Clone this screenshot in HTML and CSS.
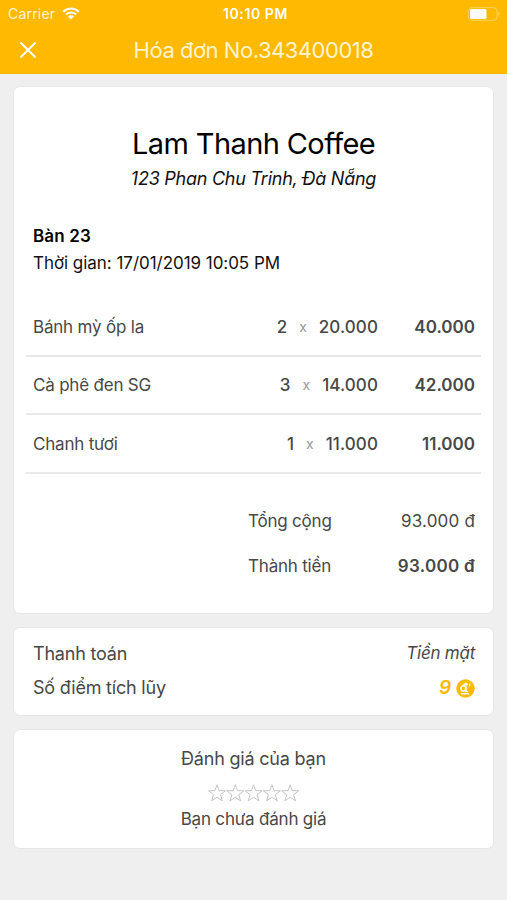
FILE: index.html
```html
<!DOCTYPE html>
<html lang="vi">
<head>
    <meta charset="UTF-8">
    <title>Hóa đơn</title>
    <link rel="stylesheet" href="styles.css">
</head>
<body>
<div class="header">
    <div class="status">
        <div class="carrier">
            <span>Carrier</span>
            <svg class="wifi" width="18" height="13" viewBox="0 0 18 13">
                <path d="M1.2 4.7a11 11 0 0 1 15.6 0M3.9 7.6a7.2 7.2 0 0 1 10.2 0" fill="none" stroke="#fff" stroke-width="2.1"/>
                <path d="M9 12.6 5.9 9.5a4.4 4.4 0 0 1 6.2 0z" fill="#fff"/>
            </svg>
        </div>
        <div class="clock">10:10 PM</div>
        <svg class="battery" width="32" height="14" viewBox="0 0 32 14">
            <rect x=".6" y=".6" width="28.4" height="12.8" rx="3.4" fill="none" stroke="#ffd15a"/>
            <rect x="2" y="2" width="16.5" height="10" rx="1.5" fill="#fff"/>
            <path d="M30.2 4.6c1.6.8 1.6 4 0 4.8z" fill="#ffd15a"/>
        </svg>
    </div>
    <div class="nav">
        <svg class="close" width="16" height="16" viewBox="0 0 16 16">
            <path d="M.5.5l15 15M15.5.5l-15 15" stroke="#fff" stroke-width="2"/>
        </svg>
        <h1>Hóa đơn No.343400018</h1>
    </div>
</div>

<div class="card bill">
    <h2>Lam Thanh Coffee</h2>
    <p class="address">123 Phan Chu Trinh, Đà Nẵng</p>
    <p class="table-name">Bàn 23</p>
    <p class="time">Thời gian: 17/01/2019 10:05 PM</p>
    <ul class="items">
        <li><span class="name">Bánh mỳ ốp la</span><span class="qty">2</span><span class="x">x</span><span class="price">20.000</span><span class="sum">40.000</span></li>
        <li><span class="name">Cà phê đen SG</span><span class="qty">3</span><span class="x">x</span><span class="price">14.000</span><span class="sum">42.000</span></li>
        <li><span class="name">Chanh tươi</span><span class="qty">1</span><span class="x">x</span><span class="price">11.000</span><span class="sum">11.000</span></li>
    </ul>
    <div class="total"><span class="label">Tổng cộng</span><span class="value">93.000 đ</span></div>
    <div class="total"><span class="label">Thành tiền</span><span class="value bold">93.000 đ</span></div>
</div>

<div class="card payment">
    <div class="row"><span class="pay-label">Thanh toán</span><span class="method">Tiền mặt</span></div>
    <div class="row">
        <span class="point-label">Số điểm tích lũy</span>
        <span class="points">9
            <svg width="19" height="19" viewBox="0 0 19 19">
                <circle cx="9.5" cy="9.5" r="9.2" fill="#ffb901"/>
                <ellipse cx="7.3" cy="9.4" rx="2.3" ry="2.7" fill="none" stroke="#fff" stroke-width="1.5"/>
                <path d="M10 3.4v9.2h2M7.4 5.2h4.4M13.6 4.4v2.8M5 14.8h8" fill="none" stroke="#fff" stroke-width="1.4"/>
            </svg>
        </span>
    </div>
</div>

<div class="card rating">
    <p class="rating-title">Đánh giá của bạn</p>
    <svg class="stars" width="92" height="18" viewBox="0 0 92 18">
        <defs>
            <path id="star" d="M9 .8l2.1 5.8 6.4.2-5 3.9 1.8 6.1L9 13.3l-5.3 3.5 1.8-6.1L.5 6.8l6.4-.2z" fill="none" stroke="#c4c4c4"/>
        </defs>
        <use href="#star"/>
        <use href="#star" x="18.3"/>
        <use href="#star" x="36.6"/>
        <use href="#star" x="54.9"/>
        <use href="#star" x="73.2"/>
    </svg>
    <p class="rating-text">Bạn chưa đánh giá</p>
</div>
</body>
</html>
```

FILE: styles.css
```css
*{ padding: 0; margin: 0; box-sizing: border-box}
li{ list-style: none}
svg{ display: block}
body{ min-height: 900px; background: #efefef; color: #484848;
    font: 17px/24px Inter, "Liberation Sans", sans-serif}
.header{ height: 74px; background: #ffb901; color: #fff}
.status{ height: 27px; padding: 0 7px 0 8px; display: grid;
    grid-template-columns: 1fr auto 1fr; align-items: center}
.carrier{ display: flex; align-items: center; gap: 7px; font-size: 14px; color: #fff3d0; letter-spacing: .2px}
.clock{ padding-left: 3px; font-size: 14px; font-weight: 600; letter-spacing: .6px}
.battery{ justify-self: end}
.nav{ height: 46px; padding: 0 20px; display: grid;
    grid-template-columns: 16px 1fr 16px; align-items: center}
.nav h1{ font-size: 22px; font-weight: 400; text-align: center; color: #fff3d0; letter-spacing: -.48px}

.card{ margin: 0 13px 13px; background: #fff; border: 1px solid #e6e6e6; border-radius: 7px}
.bill{ height: 528px; margin-top: 12px; padding: 39px 12px 0}
.bill h2{ font-size: 29px; line-height: 36px; font-weight: 400; text-align: center; color: #000; letter-spacing: -.6px}
.address{ margin-top: 5px; font-size: 18px; font-style: italic; text-align: center; color: #111; letter-spacing: -.25px}
.table-name{ margin: 33px 7px 0; font-weight: 600; color: #000; letter-spacing: .15px}
.time{ margin: 3px 7px 0; color: #111; letter-spacing: -.04px}
.items{ margin-top: 23px}
.items li{ height: 58.6px; padding: 1px 6px 0 7px; display: flex; align-items: center; border-bottom: 2px solid #e9e9e9}
.name{ flex: 1; letter-spacing: -.2px}
.qty, .price{ font-weight: 500}
.price{ letter-spacing: .1px}
.x{ margin: 0 12px; font-size: 14px; color: #999}
.sum{ width: 97px; text-align: right; font-weight: 600}
.total{ margin: 0 6px 21px 222px; display: flex; justify-content: space-between}
.items + .total{ margin-top: 35px}
.label{ letter-spacing: -.2px}
.value{ letter-spacing: .2px}
.bold{ font-weight: 600; letter-spacing: .3px}

.payment{ height: 89px; padding: 14px 18px 0 19px; font-size: 18px; letter-spacing: -.2px}
.row{ height: 34px; display: flex; justify-content: space-between}
.method{ margin-top: -1px; font-size: 17px; font-style: italic; letter-spacing: -.25px}
.points{ height: 24px; display: flex; align-items: center; gap: 5px;
    color: #ffb901; font-size: 19px; font-weight: 600; font-style: italic}

.rating{ height: 120px; padding-top: 17px; text-align: center; font-size: 18px; letter-spacing: -.2px}
.stars{ margin: 13px auto 5px}
.rating-text{ font-size: 17px}
```
